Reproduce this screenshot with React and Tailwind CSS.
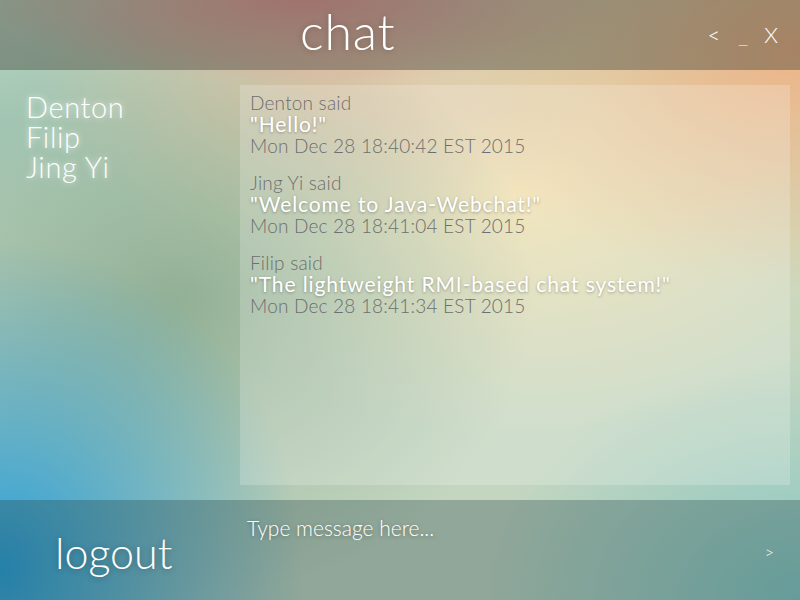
import React, { useState } from 'react'

const users = ['Denton', 'Filip', 'Jing Yi']

const messages = [
  { from: 'Denton', text: 'Hello!', date: 'Mon Dec 28 18:40:42 EST 2015' },
  { from: 'Jing Yi', text: 'Welcome to Java-Webchat!', date: 'Mon Dec 28 18:41:04 EST 2015' },
  { from: 'Filip', text: 'The lightweight RMI-based chat system!', date: 'Mon Dec 28 18:41:34 EST 2015' },
]

const App = () => {
  const [draft, setDraft] = useState('')

  return (
    <main className="w-[800px] h-[600px] flex flex-col overflow-hidden font-['Lato','Open_Sans',sans-serif] font-light text-white bg-[#c4d6c0] bg-[radial-gradient(ellipse_45%_40%_at_100%_8%,#efb486_0%,transparent_100%),radial-gradient(ellipse_40%_14%_at_38%_0%,#e49a98_0%,transparent_100%),radial-gradient(ellipse_38%_55%_at_0%_95%,#2a9ed6_0%,transparent_100%),radial-gradient(ellipse_45%_50%_at_22%_50%,#92b096_0%,transparent_100%),radial-gradient(ellipse_35%_25%_at_40%_15%,#e2c4a6_0%,transparent_100%),radial-gradient(ellipse_50%_40%_at_65%_32%,#efdfae_0%,transparent_100%),radial-gradient(ellipse_40%_40%_at_100%_100%,#86c6c2_0%,transparent_100%),radial-gradient(ellipse_35%_30%_at_0%_20%,#a6ccbc_0%,transparent_100%)]">
      <header className="h-[70px] shrink-0 flex items-center bg-[#3a3a30]/40">
        <h1 className="ml-[300px] text-[50px] leading-none pb-[8px] tracking-[0.8px] [text-shadow:0_0_6px_rgba(0,0,0,0.25)]">chat</h1>
        <div className="ml-auto mr-[22px] flex items-center gap-[16px] text-[22px] leading-none">
          <button className="mr-[2px]">&lt;</button>
          <button>_</button>
          <button>X</button>
        </div>
      </header>

      <div className="flex-1 flex">
        <aside className="w-[240px] shrink-0 pl-[26px] pt-[22px]">
          {users.map((u) => (
            <p key={u} className="text-[29px] leading-[30px] tracking-[0.6px] [text-shadow:0_0_6px_rgba(255,255,255,0.8)]">{u}</p>
          ))}
        </aside>

        <section className="flex-1 mt-[15px] mb-[15px] mr-[10px] bg-white/20 px-[10px] pt-[7px]">
          {messages.map((m, i) => (
            <div key={i} className="mb-[16px] text-[19px] leading-[21px] tracking-[0.2px]">
              <p className="text-[#6e6e6e]">{m.from} said</p>
              <p className="text-[21px] leading-[22px] font-normal tracking-[0.9px] [text-shadow:0_1px_3px_rgba(0,0,0,0.3)]">"{m.text}"</p>
              <p className="text-[#6e6e6e]">{m.date}</p>
            </div>
          ))}
        </section>
      </div>

      <footer className="h-[100px] shrink-0 flex bg-[#1a3a40]/30">
        <div className="w-[240px] shrink-0 flex items-center pl-[55px] pt-[5px]">
          <button className="text-[43px] leading-none [text-shadow:0_1px_6px_rgba(0,0,0,0.3)]">logout</button>
        </div>
        <div className="flex-1 flex pt-[12px] pr-[26px]">
          <input
            className="flex-1 self-start bg-transparent pl-[7px] text-[21px] text-white placeholder:text-white outline-none [text-shadow:0_1px_4px_rgba(0,0,0,0.35)]"
            placeholder="Type message here..."
            value={draft}
            onChange={(e) => setDraft(e.target.value)}
          />
          <button className="self-start mt-[28px] text-[16px]">&gt;</button>
        </div>
      </footer>
    </main>
  )
}

export default App
